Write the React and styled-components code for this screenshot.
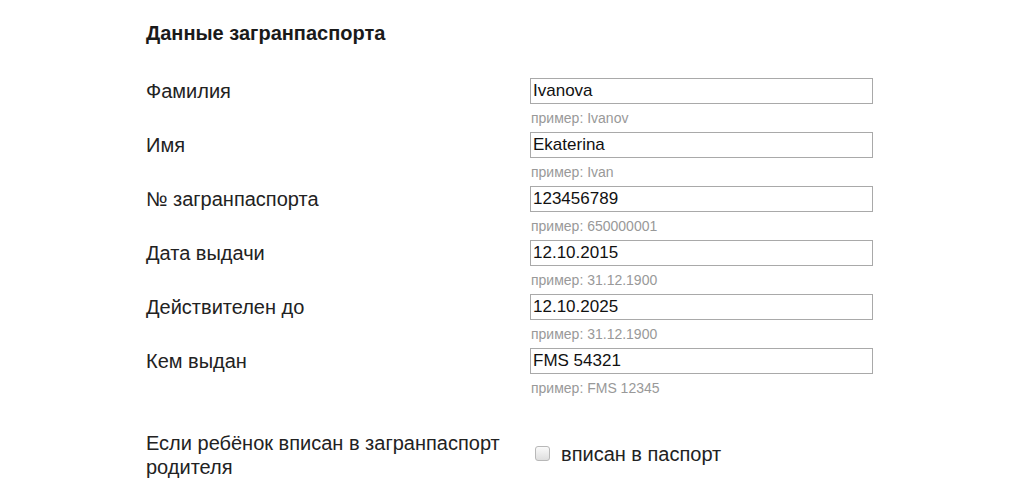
import React from "react";
import styled, { createGlobalStyle } from "styled-components";

const Global = createGlobalStyle`
  html, body { margin: 0; padding: 0; background: #fff; }
  body { font-family: "Liberation Sans", Arial, sans-serif; color: #222; }
`;

const Page = styled.div`
  padding: 21px 0 0 146px;
  width: 1024px;
  height: 504px;
  box-sizing: border-box;
  overflow: hidden;
`;

const Title = styled.h2`
  margin: 0 0 33px;
  font-size: 20px;
  font-weight: bold;
  color: #1a1a1a;
  line-height: 24px;
`;

const Row = styled.div`
  display: grid;
  grid-template-columns: 384px 343px;
  align-items: start;
  height: 54px;
`;

const Label = styled.div`
  font-size: 20px;
  line-height: 24px;
  padding-top: 1px;
  color: #222;
`;

const Field = styled.div`
  display: flex;
  flex-direction: column;
`;

const Input = styled.input`
  box-sizing: border-box;
  width: 343px;
  height: 26px;
  border: 1px solid #a9a9a9;
  padding: 0 2px;
  font-family: "Liberation Sans", Arial, sans-serif;
  font-size: 17px;
  color: #111;
  outline: none;
`;

const Hint = styled.div`
  margin-top: 6px;
  padding-left: 1px;
  font-size: 14px;
  line-height: 16px;
  color: #999;
`;

const CheckRow = styled.div`
  display: grid;
  grid-template-columns: 384px auto;
  align-items: center;
  margin-top: 28px;
`;

const CheckLabel = styled.label`
  display: flex;
  align-items: center;
  gap: 11px;
  font-size: 20px;
  color: #222;
  padding-left: 5px;
`;

const Box = styled.span`
  box-sizing: border-box;
  width: 15px;
  height: 15px;
  margin-top: -3px;
  border: 1px solid #b8b8b8;
  border-radius: 3px;
  background: linear-gradient(#fafafa, #dedede);
  display: inline-block;
`;

const fields = [
  ["Фамилия", "Ivanova", "пример: Ivanov"],
  ["Имя", "Ekaterina", "пример: Ivan"],
  ["№ загранпаспорта", "123456789", "пример: 650000001"],
  ["Дата выдачи", "12.10.2015", "пример: 31.12.1900"],
  ["Действителен до", "12.10.2025", "пример: 31.12.1900"],
  ["Кем выдан", "FMS 54321", "пример: FMS 12345"],
];

export default function App() {
  return (
    <>
      <Global />
      <Page>
        <Title>Данные загранпаспорта</Title>
        {fields.map(([l, v, h]) => (
          <Row key={l}>
            <Label>{l}</Label>
            <Field>
              <Input defaultValue={v} />
              <Hint>{h}</Hint>
            </Field>
          </Row>
        ))}
        <CheckRow>
          <Label>
            Если ребёнок вписан в загранпаспорт
            <br />
            родителя
          </Label>
          <CheckLabel>
            <Box />
            вписан в паспорт
          </CheckLabel>
        </CheckRow>
      </Page>
    </>
  );
}
